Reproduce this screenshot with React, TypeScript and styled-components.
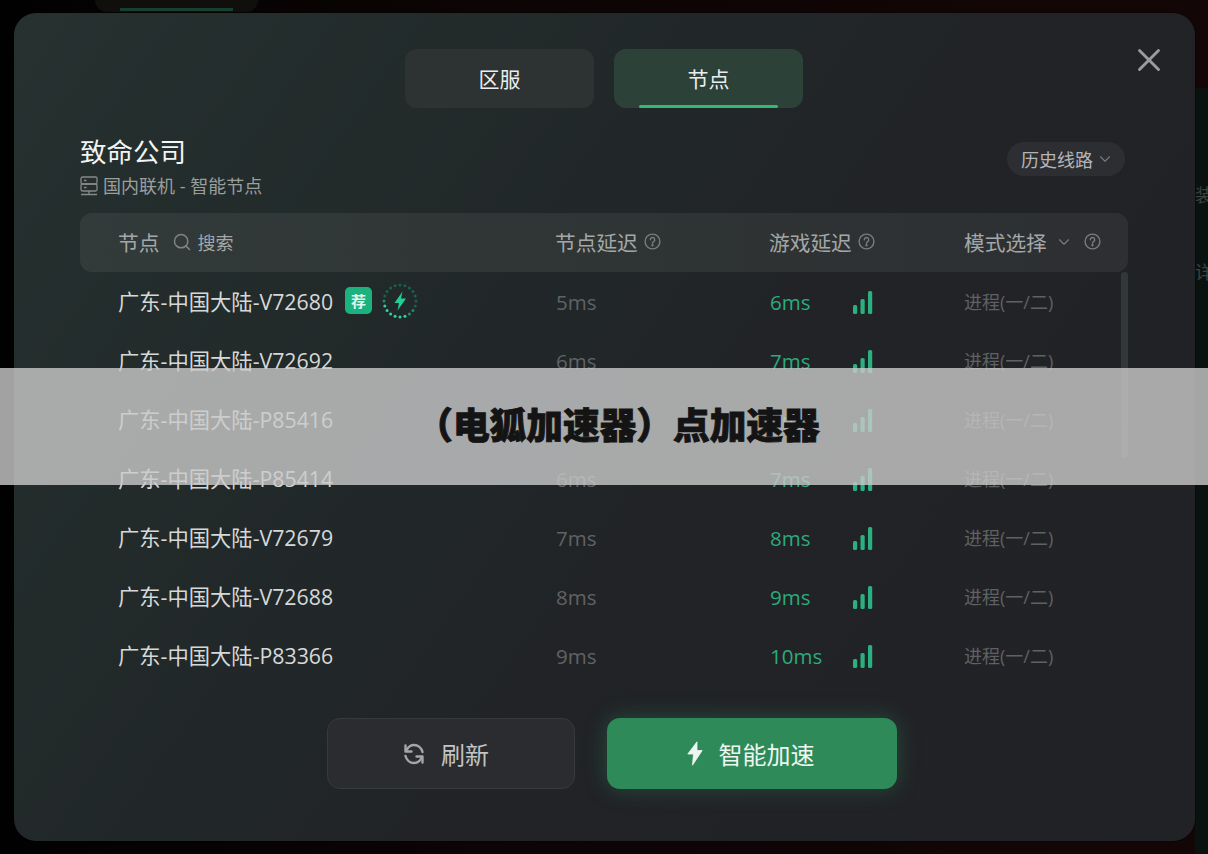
import React, { FC } from 'react'
import styled, { createGlobalStyle } from 'styled-components'
import { ChevronDown, Search, X } from 'lucide-react'

const GlobalStyle = createGlobalStyle`
	html, body {
		margin: 0;
		padding: 0;
		background: #070304;
	}
	* {
		box-sizing: border-box;
	}
`

const Page = styled.div`
	position: relative;
	width: 1208px;
	height: 854px;
	overflow: hidden;
	padding: 13px 13px 13px 14px;
	font-family: 'Open Sans', 'Noto Sans CJK SC', sans-serif;
	background: linear-gradient(90deg, #020101 0%, #0c0405 40%, #140606 100%);
`

const BehindTab = styled.div`
	position: absolute;
	left: 95px;
	top: -20px;
	width: 163px;
	height: 32px;
	border-radius: 12px;
	background: #100f0e;
	&::after {
		content: '';
		position: absolute;
		left: 25px;
		right: 25px;
		bottom: 1px;
		height: 3px;
		background: #174030;
	}
`

const BehindPanel = styled.div`
	position: absolute;
	right: 0;
	top: 88px;
	width: 13px;
	bottom: 0;
	padding-top: 97px;
	color: #3a4340;
	font-size: 18px;
	overflow: hidden;
	background: #0a1210;
	span {
		display: block;
		height: 77px;
		line-height: 20px;
	}
`

const Modal = styled.main`
	position: relative;
	height: 828px;
	border-radius: 22px;
	padding: 36px 67px 0 66px;
	background: linear-gradient(125deg, #263130 0%, #222a2a 28%, #212327 58%, #212226 100%);
	box-shadow: 0 0 0 1px rgba(0, 0, 0, 0.25);
`

const CloseButton = styled.button`
	position: absolute;
	top: 28px;
	right: 27px;
	width: 38px;
	height: 38px;
	padding: 0;
	border: 0;
	background: none;
	color: #9a9c9e;
	display: flex;
	align-items: center;
	justify-content: center;
`

const Tabs = styled.nav`
	display: flex;
	justify-content: center;
	gap: 20px;
`

const Tab = styled.div<{ $active?: boolean }>`
	position: relative;
	width: 189px;
	height: 59px;
	padding-bottom: 2px;
	border-radius: 12px;
	display: flex;
	align-items: center;
	justify-content: center;
	font-size: 21px;
	color: #eceded;
	background: ${(p) => (p.$active ? '#2c4239' : '#2d3333')};
	${(p) =>
		p.$active &&
		`
		&::after {
			content: '';
			position: absolute;
			left: 25px;
			right: 25px;
			bottom: 0;
			height: 3px;
			border-radius: 2px;
			background: #35b878;
		}
	`}
`

const TitleRow = styled.div`
	display: flex;
	justify-content: space-between;
	align-items: flex-start;
	margin-top: 26px;
	padding-right: 3px;
`

const Title = styled.h1`
	margin: 0;
	font-size: 26.5px;
	line-height: 36px;
	font-weight: 400;
	color: #f3f4f4;
`

const SubTitle = styled.div`
	display: flex;
	align-items: center;
	gap: 5px;
	margin-top: 4px;
	font-size: 18px;
	line-height: 24px;
	color: #9a9f9e;
`

const HistoryButton = styled.div`
	display: flex;
	align-items: center;
	gap: 3px;
	height: 34px;
	margin-top: 8px;
	padding: 0 11px 0 14px;
	border-radius: 17px;
	font-size: 18px;
	color: #b4b5b6;
	background: #2c2e32;
	svg {
		color: #77797c;
	}
`

const Row = styled.div`
	display: grid;
	grid-template-columns: 437px 214px 195px 1fr;
	align-items: center;
	height: 59px;
	padding-left: 38px;
`

const HeaderRow = styled(Row)`
	margin-top: 15px;
	padding-bottom: 2px;
	border-radius: 12px;
	background: linear-gradient(90deg, #323b3a 0%, #2f3434 50%, #2d2f33 100%);
	font-size: 20.7px;
	color: #a3a7a7;
`

const HeaderCell = styled.div`
	display: flex;
	align-items: center;
	gap: 6px;
	svg {
		flex: none;
	}
`

const SearchBox = styled.span`
	display: flex;
	align-items: center;
	gap: 5px;
	margin-left: 7px;
	font-size: 18px;
	color: #a3a7a7;
	svg {
		color: #7f8484;
	}
`

const ModeChevron = styled(ChevronDown)`
	margin: 0 5px 0 2px;
	color: #787c7d;
`

const ListWrap = styled.div`
	position: relative;
`

const ScrollThumb = styled.div`
	position: absolute;
	top: 0;
	right: 0;
	width: 7px;
	height: 186px;
	border-radius: 4px;
	background: #34373a;
`

const NodeName = styled.div`
	display: flex;
	align-items: center;
	padding-bottom: 2px;
	font-size: 21.3px;
	color: #d6d8d8;
`

const Badge = styled.span`
	display: flex;
	align-items: center;
	justify-content: center;
	width: 27px;
	height: 27px;
	margin-left: 12px;
	border-radius: 5px;
	background: #1cb27d;
	color: #e4f7ef;
	font-size: 15px;
	font-weight: 700;
`

const BoostRing = styled.svg`
	margin-left: 10px;
`

const Latency = styled.div`
	padding: 1px 0 0 1px;
	font-size: 20.5px;
	color: #5f6364;
`

const GameLatency = styled.div`
	display: grid;
	grid-template-columns: 83px auto;
	align-items: center;
	justify-items: start;
	padding: 1px 0 0 1px;
	font-size: 20.5px;
	color: #2bab7c;
`

const Mode = styled.div`
	padding-bottom: 2px;
	font-size: 18px;
	color: #5f6163;
`

const Actions = styled.div`
	display: flex;
	justify-content: center;
	gap: 32px;
	margin-top: 33px;
	margin-left: 16px;
`

const RefreshButton = styled.button`
	width: 248px;
	height: 71px;
	padding: 0 11px 0 0;
	display: flex;
	align-items: center;
	justify-content: center;
	gap: 15px;
	border-radius: 13px;
	border: 1px solid #38393d;
	background: #2b2c30;
	color: #c3c4c5;
	font-family: inherit;
	font-size: 24px;
	svg {
		color: #a5a6a8;
	}
`

const BoostButton = styled.button`
	width: 290px;
	height: 71px;
	padding: 0 3px 0 0;
	display: flex;
	align-items: center;
	justify-content: center;
	gap: 16px;
	border: 0;
	border-radius: 13px;
	background: #2e8b59;
	color: #eef6f1;
	font-family: inherit;
	font-size: 24px;
	box-shadow: 0 0 22px rgba(46, 139, 89, 0.4);
`

const Banner = styled.div`
	position: absolute;
	left: 0;
	right: 0;
	top: 368px;
	height: 117px;
	display: flex;
	align-items: center;
	justify-content: center;
	padding: 0 0 7px 28px;
	background: rgba(203, 203, 203, 0.8);
	color: #141414;
	font-size: 36.7px;
	font-weight: 900;
	-webkit-text-stroke: 0.9px #141414;
	white-space: nowrap;
`

const HelpIcon: FC = () => (
	<svg width="17" height="17" viewBox="0 0 17 17" fill="none" stroke="#787c7d" strokeWidth="1.4" strokeLinecap="round">
		<circle cx="8.5" cy="8.5" r="7.4" />
		<path d="M6.3 6.7a2.2 2.2 0 1 1 3.3 1.9c-.7.4-1.1.8-1.1 1.6" />
		<circle cx="8.5" cy="12.3" r=".5" fill="#787c7d" />
	</svg>
)

const ServerIcon: FC = () => (
	<svg width="18" height="20" viewBox="0 0 18 20" fill="none" stroke="#858a89" strokeWidth="1.3">
		<rect x="1" y="1" width="16" height="7" rx="1.5" />
		<rect x="1" y="8" width="16" height="7" rx="1.5" />
		<path d="M4 4.5h2.5M4 11.5h2.5M1 18.5h16M9 15v3.5" />
	</svg>
)

const RefreshIcon: FC = () => (
	<svg width="24" height="24" viewBox="0 0 24 24" fill="none" stroke="currentColor" strokeWidth="2.4" strokeLinecap="round" strokeLinejoin="round">
		<path d="M20.5 10C19.5 6 16 3 12 3 9 3 6.5 4.5 4.5 8" />
		<path d="M3.5 3.5v6h6" />
		<path d="M3.5 14C4.5 18 8 21 12 21c3 0 5.5-1.5 7.5-5" />
		<path d="M20.5 20.5v-6h-6" />
	</svg>
)

const BoltIcon: FC = () => (
	<svg width="16" height="25" viewBox="0 0 16 25" fill="currentColor" stroke="currentColor" strokeWidth="0.8" strokeLinejoin="round">
		<path d="M10 .8 .8 13h5.7l-1 11.2L15.2 9.5H10z" />
	</svg>
)

// twenty dots round the ring, the lower right ones lit
const ringDots = Array.from({ length: 20 }, (_, i) => {
	const angle = (i / 20) * Math.PI * 2
	return {
		x: 18 + Math.cos(angle) * 16,
		y: 18 + Math.sin(angle) * 16,
		lit: i >= 4 && i <= 9,
		mid: i >= 2 && i <= 10,
	}
})

const RingIcon: FC = () => (
	<BoostRing width="36" height="36" viewBox="0 0 36 36">
		{ringDots.map((dot) => (
			<circle
				key={`${dot.x}-${dot.y}`}
				cx={dot.x}
				cy={dot.y}
				r="1.5"
				fill={dot.lit ? '#2fd49a' : dot.mid ? '#1f8d69' : '#1c5f4a'}
			/>
		))}
		<path d="M20.5 8.5 12.5 20H17l-1.500 7.500 8.500-12H19z" fill="#1fd092" />
	</BoostRing>
)

const SignalBars: FC = () => (
	<svg width="20" height="23" viewBox="0 0 20 23" fill="#2bb180">
		<rect x="0" y="14" width="4.2" height="9" rx="1.5" />
		<rect x="7.5" y="8" width="4.2" height="15" rx="1.5" />
		<rect x="15" y="0" width="4.2" height="23" rx="1.5" />
	</svg>
)

type Node = { name: string; delay: string; game: string; best?: boolean }

const nodes: Node[] = [
	{ name: '广东-中国大陆-V72680', delay: '5ms', game: '6ms', best: true },
	{ name: '广东-中国大陆-V72692', delay: '6ms', game: '7ms' },
	{ name: '广东-中国大陆-P85416', delay: '6ms', game: '7ms' },
	{ name: '广东-中国大陆-P85414', delay: '6ms', game: '7ms' },
	{ name: '广东-中国大陆-V72679', delay: '7ms', game: '8ms' },
	{ name: '广东-中国大陆-V72688', delay: '8ms', game: '9ms' },
	{ name: '广东-中国大陆-P83366', delay: '9ms', game: '10ms' },
]

const App: FC = () => (
	<Page>
		<GlobalStyle />
		<BehindTab />
		<BehindPanel>
			<span>装</span>
			<span>详</span>
		</BehindPanel>
		<Modal>
			<CloseButton>
				<X size={38} strokeWidth={1.8} />
			</CloseButton>
			<Tabs>
				<Tab>区服</Tab>
				<Tab $active>节点</Tab>
			</Tabs>
			<TitleRow>
				<div>
					<Title>致命公司</Title>
					<SubTitle>
						<ServerIcon />
						国内联机 - 智能节点
					</SubTitle>
				</div>
				<HistoryButton>
					历史线路
					<ChevronDown size={18} strokeWidth={1.5} />
				</HistoryButton>
			</TitleRow>
			<HeaderRow>
				<HeaderCell>
					节点
					<SearchBox>
						<Search size={20} strokeWidth={1.8} />
						搜索
					</SearchBox>
				</HeaderCell>
				<HeaderCell>
					节点延迟
					<HelpIcon />
				</HeaderCell>
				<HeaderCell>
					游戏延迟
					<HelpIcon />
				</HeaderCell>
				<HeaderCell>
					模式选择
					<ModeChevron size={18} strokeWidth={1.5} />
					<HelpIcon />
				</HeaderCell>
			</HeaderRow>
			<ListWrap>
				<ScrollThumb />
				{nodes.map((node) => (
					<Row key={node.name}>
						<NodeName>
							{node.name}
							{node.best && (
								<>
									<Badge>荐</Badge>
									<RingIcon />
								</>
							)}
						</NodeName>
						<Latency>{node.delay}</Latency>
						<GameLatency>
							{node.game}
							<SignalBars />
						</GameLatency>
						<Mode>进程(一/二)</Mode>
					</Row>
				))}
			</ListWrap>
			<Actions>
				<RefreshButton>
					<RefreshIcon />
					刷新
				</RefreshButton>
				<BoostButton>
					<BoltIcon />
					智能加速
				</BoostButton>
			</Actions>
		</Modal>
		<Banner>（电狐加速器）点加速器</Banner>
	</Page>
)

export default App
